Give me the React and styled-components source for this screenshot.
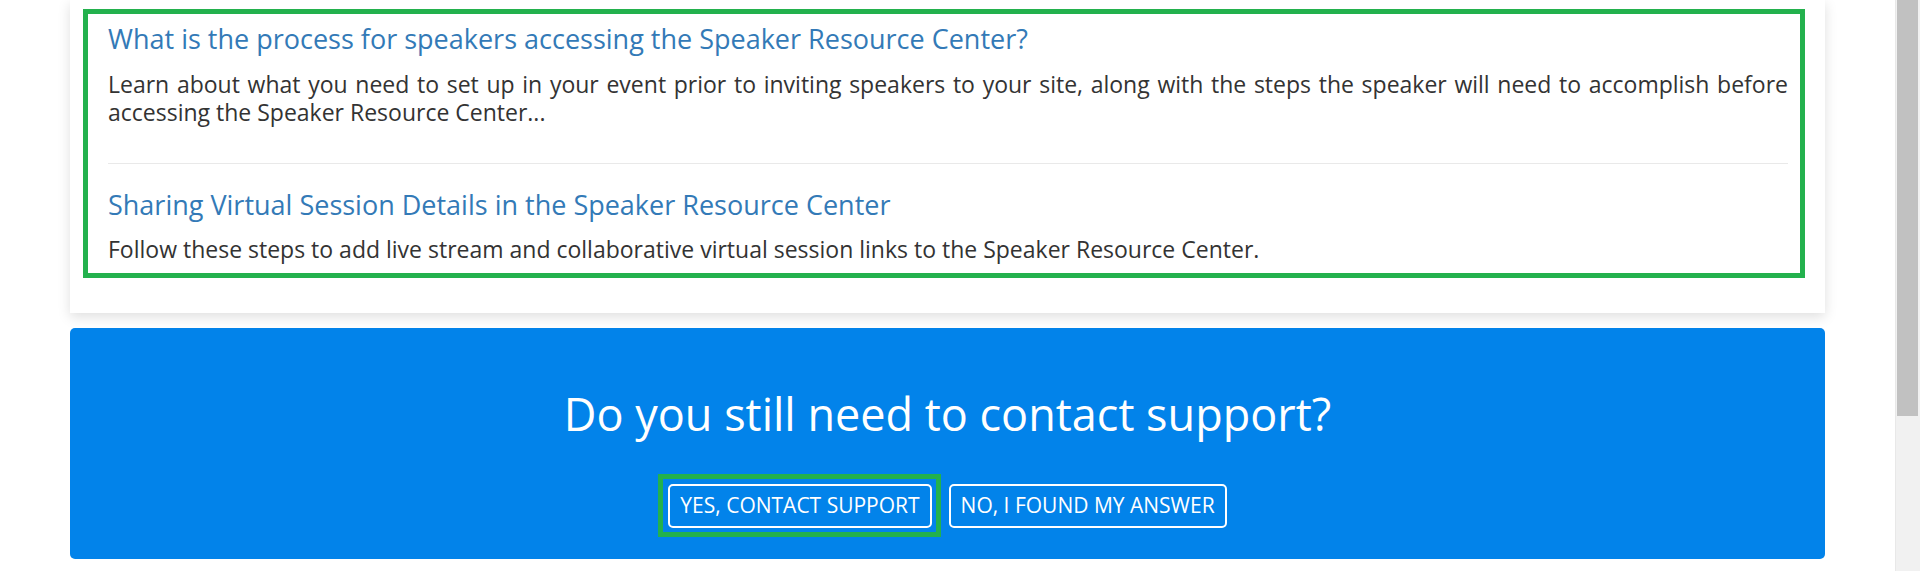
import styled, { createGlobalStyle } from "styled-components";

const GlobalStyle = createGlobalStyle`
  html, body {
    margin: 0;
    padding: 0;
    overflow: hidden;
    background: #fff;
  }
  body {
    font-family: "Open Sans", "Liberation Sans", sans-serif;
    color: #333;
  }
`;

let Page = styled.div`
  display: flex;
  height: 571px;
`;

let Main = styled.div`
  flex: 1;
  display: flex;
  flex-direction: column;
  gap: 15px;
  padding: 0 70px;
  min-width: 0;
`;

let Card = styled.div`
  background: #fff;
  box-shadow: 0 4px 12px rgba(0, 0, 0, 0.13);
  padding: 9px 20px 35px 13px;
`;

let Highlight = styled.div`
  border: 5px solid #23b14d;
  padding: 10px 12px 9px 20px;
`;

let Article = styled.div`
  padding: ${({ first }) => (first ? "0 0 36px" : "26px 0 0")};
  border-bottom: ${({ first }) => (first ? "1px solid #e9e9e9" : "none")};
`;

let ArticleTitle = styled.a`
  display: block;
  font-size: 27px;
  line-height: 29.7px;
  color: #337ab7;
  text-decoration: none;
  margin-bottom: 16px;
  cursor: pointer;
`;

let ArticleText = styled.p`
  margin: 0;
  font-size: 23px;
  line-height: 28.5px;
  color: #333;
  text-align: justify;
`;

let Banner = styled.div`
  background: #0283ea;
  border-radius: 5px;
  padding: 61px 20px 31px;
  display: flex;
  flex-direction: column;
  align-items: center;
`;

let BannerHeading = styled.h2`
  margin: 0 0 45.5px;
  font-size: 45px;
  line-height: 49.5px;
  font-weight: 400;
  color: #fff;
`;

let Buttons = styled.div`
  display: flex;
  gap: 17px;
`;

let OutlineButton = styled.button`
  position: relative;
  font-family: "Open Sans", "Liberation Sans", sans-serif;
  font-size: 21px;
  line-height: 28.6px;
  color: #fff;
  background: transparent;
  border: 2px solid #fff;
  border-radius: 5px;
  padding: 5.5px 10px;
  cursor: pointer;

  &::after {
    content: "";
    display: ${({ highlighted }) => (highlighted ? "block" : "none")};
    position: absolute;
    inset: -12px -11px -11px -12px;
    border: 5px solid #23b14d;
    pointer-events: none;
  }
`;

let Scrollbar = styled.div`
  width: 25px;
  flex-shrink: 0;
  background: #f1f1f1;
  border-left: 1px solid #e8e8e8;
  box-sizing: border-box;
  padding: 0 2px 0 1px;
`;

let Thumb = styled.div`
  height: 416px;
  background: #c1c1c1;
`;

const articles = [
  {
    title: "What is the process for speakers accessing the Speaker Resource Center?",
    text: "Learn about what you need to set up in your event prior to inviting speakers to your site, along with the steps the speaker will need to accomplish before accessing the Speaker Resource Center...",
  },
  {
    title: "Sharing Virtual Session Details in the Speaker Resource Center",
    text: "Follow these steps to add live stream and collaborative virtual session links to the Speaker Resource Center.",
  },
];

function App() {
  return (
    <>
      <GlobalStyle />
      <Page>
        <Main>
          <Card>
            <Highlight>
              {articles.map((a, i) => (
                <Article key={a.title} first={i === 0}>
                  <ArticleTitle>{a.title}</ArticleTitle>
                  <ArticleText>{a.text}</ArticleText>
                </Article>
              ))}
            </Highlight>
          </Card>

          <Banner>
            <BannerHeading>Do you still need to contact support?</BannerHeading>
            <Buttons>
              <OutlineButton highlighted>YES, CONTACT SUPPORT</OutlineButton>
              <OutlineButton>NO, I FOUND MY ANSWER</OutlineButton>
            </Buttons>
          </Banner>
        </Main>
        <Scrollbar>
          <Thumb />
        </Scrollbar>
      </Page>
    </>
  );
}

export default App;
